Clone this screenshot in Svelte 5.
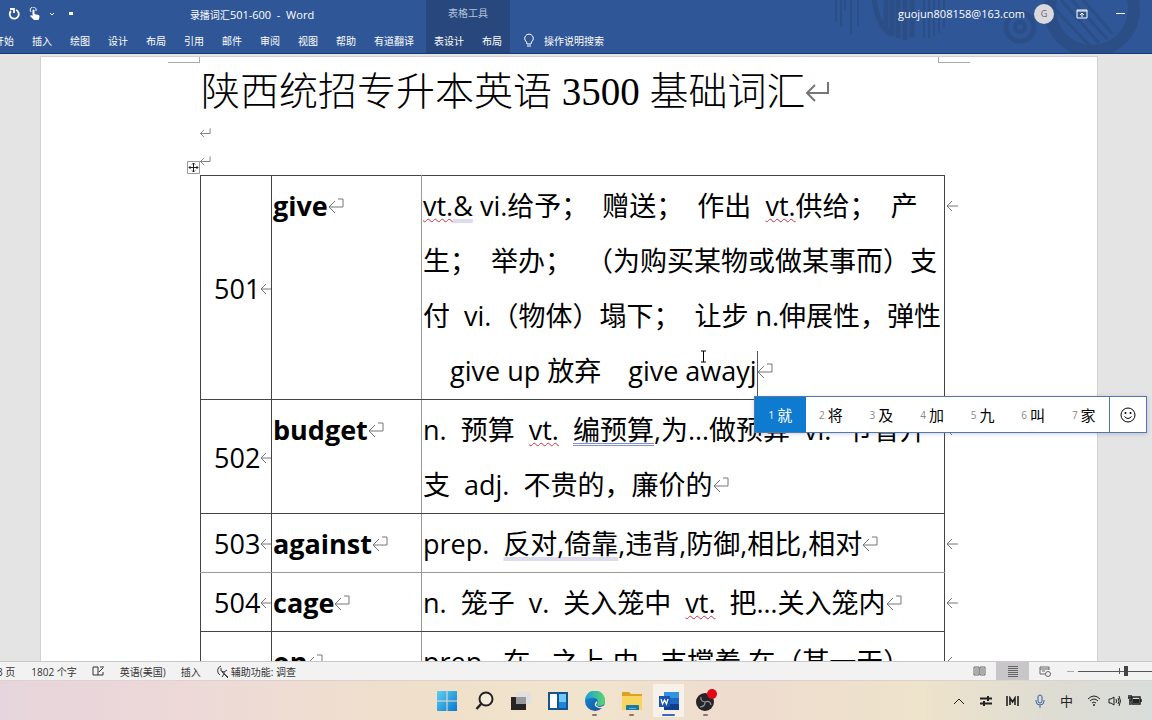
<script lang="ts">
    interface Segment {
        text: string;
        proof?: "spelling" | "grammar" | "wording";
    }

    interface Entry {
        no: number;
        word: string;
        lines: Segment[][];
    }

    const tabs = ["开始", "插入", "绘图", "设计", "布局", "引用", "邮件", "审阅", "视图", "帮助", "有道翻译"];
    const tableTabs = ["表设计", "布局"];
    const candidates = ["就", "将", "及", "加", "九", "叫", "家"];

    const entries: Entry[] = [
        {
            no: 501,
            word: "give",
            lines: [
                [
                    { text: "vt.", proof: "spelling" },
                    { text: "&", proof: "wording" },
                    { text: " vi.给予；  赠送；  作出  " },
                    { text: "vt.", proof: "spelling" },
                    { text: "供给；  产" },
                ],
                [{ text: "生；  举办；  （为购买某物或做某事而）支" }],
                [{ text: "付  vi.（物体）塌下；  让步 n.伸展性，弹性" }],
                [{ text: "　give up 放弃　give awayj" }],
            ],
        },
        {
            no: 502,
            word: "budget",
            lines: [
                [
                    { text: "n.  预算  " },
                    { text: "vt.", proof: "spelling" },
                    { text: "  " },
                    { text: "编预算", proof: "grammar" },
                    { text: ",为…做预算  vi.  节省开" },
                ],
                [{ text: "支  adj.  不贵的，廉价的" }],
            ],
        },
        {
            no: 503,
            word: "against",
            lines: [
                [
                    { text: "prep.  " },
                    { text: "反对,倚靠", proof: "wording" },
                    { text: ",违背,防御,相比,相对" },
                ],
            ],
        },
        {
            no: 504,
            word: "cage",
            lines: [
                [
                    { text: "n.  笼子  v.  关入笼中  " },
                    { text: "vt.", proof: "spelling" },
                    { text: "  把…关入笼内" },
                ],
            ],
        },
        {
            no: 505,
            word: "on",
            lines: [
                [{ text: "prep.  在…之上,由…支撑着,在（某一天）" }],
                [{ text: "adv.  向前，继续" }],
            ],
        },
    ];

    let activeCandidate = $state(0);
    let zoom = $state(50);
</script>

{#snippet cellMark()}
    <svg class="cell-mark" viewBox="0 0 16 16" aria-hidden="true"><path d="M7 3 1 9l6 6M1 9h14V1h-5" /></svg>
{/snippet}

{#snippet rowMark()}
    <svg class="row-mark" viewBox="0 0 12 12" aria-hidden="true"><path d="M6 1 1 6l5 5M1 6h11" /></svg>
{/snippet}

{#snippet paragraphMark()}
    <svg class="paragraph-mark" viewBox="0 0 24 24" aria-hidden="true"><path d="M9 4 1 12l8 8M1 12h21V1" /></svg>
{/snippet}

<div class="window">
    <header class="ribbon">
        <svg class="ribbon-art" viewBox="0 0 320 53" aria-hidden="true">
            <path d="M4 0v22M9 0v27M13 0v10M19 0v34M26 0v26" stroke-width="2" />
            <path d="M42 0q4 26 17 34M54 0v30M60 0v36M66 0v38M73 0v40M80 0v38" stroke-width="5" />
            <path d="M92 0v38M97 0v38M102 0v36M107 0v33M112 0v28" stroke-width="2" />
            <circle cx="188" cy="27" r="14" stroke-width="5" />
            <circle cx="188" cy="27" r="5" stroke-width="4" />
            <circle cx="260" cy="9" r="42" stroke-width="12" />
            <path d="m218 4 40 42M229 0l38 43M240 0l35 39M251 0l30 34" stroke-width="3" />
        </svg>

        <div class="title-bar">
            <div class="quick-access">
                <button aria-label="重复">
                    <svg width="12" height="12" viewBox="0 0 12 12"><path d="M8 2a4.500 4.500 0 1 1-5 1M2 1h4v4" stroke-width="1.800" /></svg>
                </button>
                <button aria-label="触摸模式">
                    <svg width="11" height="13" viewBox="0 0 11 13"><path d="M2 5a3 3 0 1 1 5-1" /><path class="solid" d="M3.500 3q1-1 2 0v4l4 1q1 0 1 2l-1 3H5L1 9q1-1.500 2.500 0z" /></svg>
                </button>
                <button aria-label="更多触摸选项">
                    <svg width="6" height="4" viewBox="0 0 6 4"><path d="m1 1 2 2 2-2" /></svg>
                </button>
                <button class="customize" aria-label="自定义快速访问工具栏">
                    <svg width="4" height="4" viewBox="0 0 4 4"><path class="solid" d="M0 0h4v3H0z" /></svg>
                </button>
            </div>
            <div class="file-name"><span>录播词汇</span>501-600&nbsp; -&nbsp; Word</div>
        </div>

        <nav class="tabs">
            {#each tabs as tab}
                <button>{tab}</button>
            {/each}
        </nav>

        <div class="table-tools">
            <div class="table-tools-title">表格工具</div>
            <nav>
                {#each tableTabs as tab}
                    <button>{tab}</button>
                {/each}
            </nav>
        </div>

        <div class="account">
            <span class="email">guojun808158@163.com</span>
            <span class="avatar">G</span>
            <button aria-label="功能区显示选项">
                <svg width="12" height="10" viewBox="0 0 12 10"><path d="M1 1h10v8H1zM1 2h10M6 8V4M4 6l2-2 2 2" /></svg>
            </button>
            <button aria-label="最小化">
                <svg width="10" height="10" viewBox="0 0 10 10"><path d="M0 4.500h9" /></svg>
            </button>
        </div>

        <button class="tell-me">
            <svg width="12" height="15" viewBox="0 0 12 15"><path d="M4 11q0-2-2-4a4.300 4.300 0 1 1 8 0q-2 2-2 4zM4 13h4" /></svg>
            操作说明搜索
        </button>
    </header>

    <main class="workspace">
        <article class="page">
            <span class="crop-mark left"></span>
            <span class="crop-mark right"></span>

            <h1>陕西统招专升本英语 3500 基础词汇{@render paragraphMark()}</h1>
            <p class="blank">{@render paragraphMark()}</p>
            <p class="blank">{@render paragraphMark()}</p>

            <div class="table-frame">
                <svg class="move-handle" viewBox="0 0 13 13" aria-hidden="true">
                    <path class="box" d="M.5.5h12v12H.5z" />
                    <path d="M6.500 2v9M2 6.500h9M5 3.500 6.500 2 8 3.500M5 9.500 6.500 11 8 9.500M3.500 5 2 6.500 3.500 8M9.500 5 11 6.500 9.500 8" />
                </svg>
                <table>
                    <tbody>
                        {#each entries as entry}
                            <tr>
                                <td class="no"><div>{entry.no}{@render rowMark()}</div></td>
                                <td class="word">{entry.word}{@render cellMark()}</td>
                                <td class="meaning">
                                    {#each entry.lines as line, i}
                                        <div class="line">{#each line as segment}<span class={segment.proof}>{segment.text}</span>{/each}{#if entry.no === 501 && i === 3}<span class="caret"></span>{/if}{#if i === entry.lines.length - 1}{@render cellMark()}{/if}</div>
                                    {/each}
                                </td>
                                <td class="row-end">{@render rowMark()}</td>
                            </tr>
                        {/each}
                    </tbody>
                </table>
            </div>
        </article>
    </main>

    <footer class="status-bar">
        <span class="page-count">3 页</span>
        <span class="word-count">1802 个字</span>
        <svg class="proofing" width="13" height="10" viewBox="0 0 13 10" aria-hidden="true"><path d="M6 1H1v8h5zM6 9h5V6M8 1h4M7 6l4-4" /></svg>
        <span class="language">英语(美国)</span>
        <span class="mode">插入</span>
        <svg class="access" width="13" height="13" viewBox="0 0 13 13" aria-hidden="true"><path d="M5 1a5 5 0 0 0-1 9M5 3v3l3 1 3-2M8 7v2l-2 3M8 9l4 4M6 7l6 5" /></svg>
        <span>辅助功能: 调查</span>

        <div class="views">
            <button aria-label="阅读视图">
                <svg width="13" height="10" viewBox="0 0 13 10"><path d="M1 1h5v8H1zM7 1h5v8H7zM2 3h3M2 5h3M2 7h3M8 3h3M8 5h3M8 7h3" /></svg>
            </button>
            <button class="active" aria-label="页面视图">
                <svg width="12" height="12" viewBox="0 0 12 12"><path d="M1 1.500h10M1 3.500h10M1 5.500h10M1 7.500h10M1 9.500h10M1 11.500h10" /></svg>
            </button>
            <button aria-label="Web 版式视图">
                <svg width="13" height="11" viewBox="0 0 13 11"><path d="M6 8H1V1h9v3M1 3h9M3 5h3" /><circle cx="9" cy="8" r="2.500" /></svg>
            </button>
            <button class="zoom-out" aria-label="缩小">
                <svg width="7" height="3" viewBox="0 0 7 3"><path d="M0 1.500h7" /></svg>
            </button>
            <input type="range" aria-label="显示比例" min="0" max="100" bind:value={zoom} />
        </div>
    </footer>

    <div class="taskbar">
        <div class="apps">
            <button aria-label="开始">
                <svg width="20" height="20" viewBox="0 0 20 20">
                    <defs><linearGradient id="start" x2="1" y2="1"><stop stop-color="#5ed0f2" /><stop offset="1" stop-color="#0a78cf" /></linearGradient></defs>
                    <path fill="url(#start)" d="M0 0h9.500v9.500H0zM10.500 0H20v9.500h-9.500zM0 10.500h9.500V20H0zM10.500 10.500H20V20h-9.500z" />
                </svg>
            </button>
            <button aria-label="搜索">
                <svg width="20" height="20" viewBox="0 0 20 20"><circle cx="12" cy="8" r="6.500" fill="#f6ecdc" stroke="#222" stroke-width="2" /><path d="m7.500 12.500-5 5.500" stroke="#222" stroke-width="2.500" /></svg>
            </button>
            <button aria-label="任务视图">
                <svg width="20" height="20" viewBox="0 0 20 20"><path fill="#252525" d="M0 6h15v13H0z" /><path fill="#e0e0e0" d="M5 1h15v12H5z" /><path fill="#9a9a9a" d="M5 6h10v7H5z" /></svg>
            </button>
            <button aria-label="小组件">
                <svg width="20" height="20" viewBox="0 0 20 20"><path fill="#15558f" d="M0 1h20v18H0z" /><path fill="#fff" d="M2 3h7v14H2z" /><path fill="#6fcbf5" d="M11 3h7v8h-7z" /><path fill="#1c86d6" d="M11 11h7v6h-7z" /></svg>
            </button>
            <button class="running" aria-label="Microsoft Edge">
                <svg width="20" height="20" viewBox="0 0 20 20">
                    <defs>
                        <linearGradient id="edge-top" x2="1" y2="0"><stop stop-color="#1c9de0" /><stop offset="1" stop-color="#5bd66a" /></linearGradient>
                        <linearGradient id="edge-low" x2="1" y2="1"><stop stop-color="#1c8fd8" /><stop offset="1" stop-color="#0c4a9a" /></linearGradient>
                    </defs>
                    <circle cx="10" cy="10" r="10" fill="url(#edge-low)" />
                    <path fill="url(#edge-top)" d="M0 9a10 10 0 0 1 20 1c0 4-3 5-6 5-2 0-3-1-2-2 3-4-2-7-6-6-3 0-5 1-6 2z" />
                    <path fill="#f4e9d6" d="M12 10c1 2-1 3-1 4 2 3 6 2 9 0l-2 3c-7 1-11-3-6-7z" />
                </svg>
            </button>
            <button class="running" aria-label="文件资源管理器">
                <svg width="20" height="20" viewBox="0 0 20 20"><path fill="#dba11f" d="M0 1h7l2 2h11v5H0z" /><path fill="#f8d560" d="M0 5h20v14H0z" /><path fill="#1a78a8" d="M4 15q0-1 1-1h11q1 0 1 1v4H4z" /><path fill="#54bde0" d="M7 17h7v1H7z" /></svg>
            </button>
            <button class="running current" aria-label="Word">
                <svg width="20" height="20" viewBox="0 0 20 20"><path fill="#2f93e2" d="M5 1h15v7H5z" /><path fill="#2167c2" d="M5 7h15v6H5z" /><path fill="#133d8b" d="M5 13h15v6H5z" /><path fill="#1a56b0" d="M0 5h11v11H0z" /><path d="m2 8 1.500 5 2-4 2 4L9 8" stroke="#fff" stroke-width="1.300" fill="none" /></svg>
            </button>
            <button class="running" aria-label="OBS Studio">
                <svg width="24" height="24" viewBox="0 0 24 24"><circle cx="11" cy="13" r="9" fill="#262428" /><path d="M11 13q-5-1-4-5M11 13q5-2 6 3M11 13q0 5-5 5" stroke="#999" stroke-width="1.200" fill="none" /><circle cx="18" cy="5" r="5" fill="#e30613" /></svg>
            </button>
        </div>

        <div class="tray">
            <button aria-label="显示隐藏的图标"><svg width="12" height="8" viewBox="0 0 12 8"><path d="m1 7 5-5 5 5" /></svg></button>
            <button aria-label="同步"><svg width="12" height="10" viewBox="0 0 12 10"><path d="M0 2.500h12M0 7.500h12" stroke-width="2" /><path d="M8 0v5M4 5v5" stroke-width="2" /></svg></button>
            <button aria-label="音频"><svg width="13" height="10" viewBox="0 0 13 10"><path d="M1 0v10M12 0v10M4 9V2l2.500 4L9 2v7" stroke-width="1.600" /></svg></button>
            <button class="mic" aria-label="麦克风"><svg width="10" height="14" viewBox="0 0 10 14"><rect x="3" y="1" width="4" height="8" rx="2" /><path d="M1 6v1q0 4 4 4t4-4V6M5 11v3" /></svg></button>
            <button class="ime-state" aria-label="输入法">中</button>
            <button class="system" aria-label="网络、音量和电池">
                <svg width="14" height="11" viewBox="0 0 14 11"><path d="M1 4q6-6 12 0M3 6q4-4 8 0M5 8q2-2 4 0" /><circle class="dot" cx="7" cy="10" r="1" /></svg>
                <svg width="13" height="10" viewBox="0 0 13 10"><path d="M1 3h2l3-2v8L3 7H1zM8 3q1 2 0 4M10 2q2 3 0 6M11 0q3 5 0 10" /></svg>
                <svg width="14" height="11" viewBox="0 0 14 11"><path d="M4 2h8v7H4zM13 4v3M1 0v3M3 0v3M0 3h4v2H1M2 5v5" stroke-width="1.500" /><path class="dot" d="M5 4h6v4H5z" /></svg>
            </button>
        </div>
    </div>

    <svg class="pointer" viewBox="0 0 7 13" aria-hidden="true"><path d="M1 1h5M3.500 1v11M1 12h5" /></svg>

    <div class="ime">
        {#each candidates as candidate, i}
            <button class="candidate" class:active={i === activeCandidate} onclick={() => (activeCandidate = i)}>
                <small>{i + 1}</small>{candidate}
            </button>
        {/each}
        <button class="emoji" aria-label="表情符号">
            <svg width="16" height="16" viewBox="0 0 16 16"><circle cx="8" cy="8" r="7" /><path d="M4.500 9.500q3.500 4 7 0" /><circle class="eye" cx="5.500" cy="6" r="1" /><circle class="eye" cx="10.500" cy="6" r="1" /></svg>
        </button>
    </div>
</div>

<style>

    :global(body) {
        margin: 0;
    }

    .window {
        position: relative;
        display: flex;
        flex-direction: column;
        height: 100vh;
        overflow: hidden;
        background: #e4e4e4;
        color: #000;
        font-family: "Open Sans", "Noto Sans CJK SC", sans-serif;
        font-size: 10px;
    }

    button {
        display: flex;
        align-items: center;
        justify-content: center;
        margin: 0;
        padding: 0;
        border: 0;
        background: none;
        color: inherit;
        font: inherit;
        white-space: nowrap;
    }

    svg {
        flex-shrink: 0;
        fill: none;
        stroke: currentColor;
    }

    /* ribbon */

    .ribbon {
        position: relative;
        display: grid;
        grid-template-columns: auto auto 1fr;
        grid-template-rows: 27px 26px;
        flex-shrink: 0;
        border-bottom: 1px solid #183a78;
        background: #2f5697;
        color: #fff;
    }

    .ribbon-art {
        position: absolute;
        top: 0;
        right: 0;
        width: 320px;
        height: 53px;
        color: #2c4e86;
    }

    .title-bar {
        display: flex;
        align-items: center;
        padding-left: 8px;
    }

    .quick-access {
        display: flex;
        align-items: center;
        gap: 9px;
    }

    .customize {
        margin-left: 5px;
    }

    .solid {
        fill: currentColor;
        stroke: none;
    }

    .file-name {
        flex: 1;
        padding-top: 1px;
        padding-left: 5px;
        font-size: 11px;
        text-align: center;
    }

    .file-name span {
        font-size: 10px;
    }

    .tabs {
        display: flex;
        grid-row: 2;
        margin-left: -15px;
        padding-right: 3px;
    }

    .tabs button {
        padding: 0 9px;
    }

    .table-tools {
        display: grid;
        grid-row: 1 / 3;
        grid-column: 2;
        grid-template-rows: 27px 26px;
        padding: 0 8px;
        background: #27477d;
    }

    .table-tools-title {
        color: #b4c3dc;
        line-height: 27px;
        text-align: center;
    }

    .table-tools nav {
        display: flex;
        gap: 18px;
    }

    .account {
        position: relative;
        display: flex;
        grid-column: 3;
        align-items: center;
        justify-content: flex-end;
        padding-right: 26px;
    }

    .email {
        font-size: 11px;
    }

    .avatar {
        width: 20px;
        height: 20px;
        margin: 0 22px 0 9px;
        border-radius: 50%;
        background: #d9d9de;
        color: #666;
        font-size: 9px;
        line-height: 20px;
        text-align: center;
    }

    .account button + button {
        margin-left: 28px;
    }

    .tell-me {
        grid-row: 2;
        grid-column: 3;
        justify-self: start;
        gap: 9px;
        padding-left: 13px;
    }

    /* document */

    .workspace {
        flex: 1;
        min-height: 0;
        padding: 3px 55px 0 41px;
        overflow: hidden;
    }

    .page {
        position: relative;
        min-height: 100%;
        padding: 8px 126px 0 159px;
        box-shadow: 0 0 0 1px #d0d0d0;
        box-sizing: border-box;
        background: #fff;
    }

    .crop-mark {
        position: absolute;
        top: 0;
        width: 31px;
        height: 5px;
        border-bottom: 1px solid #aaa;
    }

    .crop-mark.left {
        left: 127px;
        border-right: 1px solid #aaa;
    }

    .crop-mark.right {
        right: 127px;
        border-left: 1px solid #aaa;
    }

    h1 {
        margin: 0;
        padding-left: 1px;
        font-family: "Liberation Serif", "Noto Sans CJK SC", serif;
        font-size: 39px;
        font-weight: 300;
        line-height: 54px;
        white-space: nowrap;
    }

    .paragraph-mark {
        width: 24px;
        height: 24px;
        color: #777;
        stroke-width: 2;
    }

    .blank {
        display: flex;
        align-items: center;
        height: 28px;
        margin: 0;
    }

    .blank .paragraph-mark {
        width: 11px;
        height: 11px;
    }

    .table-frame {
        position: relative;
    }

    .move-handle {
        position: absolute;
        top: -14px;
        left: -13px;
        width: 13px;
        height: 13px;
        color: #222;
    }

    .move-handle .box {
        stroke: #999;
    }

    table {
        width: 100%;
        border-collapse: collapse;
        table-layout: fixed;
        font-size: 27px;
        line-height: 55px;
    }

    td {
        padding: 2px 0 1px 1px;
        overflow: hidden;
        border: 1px solid #444;
        vertical-align: top;
        white-space: nowrap;
    }

    tr:nth-child(3) td {
        border-bottom-color: #999;
    }

    .no {
        width: 69px;
        vertical-align: middle;
    }

    .no div {
        padding-left: 12px;
        overflow: hidden;
    }

    .word {
        width: 148px;
        border-right-color: #999;
        font-weight: 700;
    }

    td.row-end {
        width: 24px;
        padding-left: 1px;
        border: 0;
    }

    .line {
        height: 55px;
        white-space: pre;
    }

    .cell-mark {
        width: 16px;
        height: 16px;
        color: #777;
        vertical-align: 2px;
    }

    .row-mark {
        width: 12px;
        height: 12px;
        color: #777;
        vertical-align: 4px;
    }

    .spelling {
        text-decoration: underline wavy #c8324a 1px;
        text-underline-offset: 2px;
    }

    .grammar {
        text-decoration: underline double #7f92cf 1px;
        text-underline-offset: 3px;
    }

    .wording {
        text-decoration: underline #dcdcee 4px;
        text-underline-offset: 3px;
    }

    .caret {
        display: inline-block;
        width: 1px;
        height: 45px;
        margin-right: -1px;
        background: #555;
        vertical-align: middle;
    }

    /* status bar */

    .status-bar {
        display: flex;
        flex-shrink: 0;
        align-items: center;
        height: 18px;
        border-top: 1px solid #c8c8c8;
        background: #f2f2f2;
        color: #333;
        white-space: nowrap;
    }

    .page-count {
        margin: 0 16px 0 -3px;
    }

    .word-count,
    .language,
    .mode,
    .proofing {
        margin-right: 15px;
    }

    .access {
        margin-right: 2px;
    }

    .views {
        display: flex;
        align-items: center;
        align-self: stretch;
        margin-left: auto;
        color: #666;
    }

    .views button {
        width: 33px;
        height: 100%;
    }

    .views .active {
        background: #c9c6c9;
    }

    .views .zoom-out {
        width: 16px;
        color: #aaa;
    }

    input {
        width: 96px;
        height: 18px;
        margin: 0 -22px 0 0;
        appearance: none;
        background:
            linear-gradient(#555, #555) 41px 6px / 1px 6px no-repeat,
            linear-gradient(#555, #555) 0 9px / 100% 1px no-repeat;
    }

    input::-webkit-slider-thumb {
        width: 4px;
        height: 10px;
        appearance: none;
        background: #444;
    }

    /* taskbar */

    .taskbar {
        display: grid;
        grid-template-columns: 1fr auto 1fr;
        flex-shrink: 0;
        height: 40px;
        border-top: 1px solid #dcd2cf;
        box-sizing: border-box;
        background: linear-gradient(90deg, #e6d5dc, #ecd7d9 12%, #efdcd3 25%, #f0dfca 36%, #f1e4cc 50%, #eedccf 64%, #eee3cb 80%, #dddcd3 92%, #d9dddb);
        color: #222;
    }

    .apps {
        display: flex;
        grid-column: 2;
    }

    .apps button {
        position: relative;
        width: 37px;
    }

    .apps svg {
        stroke: none;
    }

    .apps .current {
        background: linear-gradient(#f8f1ea, #f8f1ea) center 3px / 31px 33px no-repeat;
    }

    .running::after {
        position: absolute;
        bottom: 4px;
        left: 16px;
        width: 5px;
        height: 2px;
        border-radius: 1px;
        background: #927565;
        content: "";
    }

    .current::after {
        left: 12px;
        width: 13px;
        background: #3a6abf;
    }

    .tray {
        display: flex;
        align-items: center;
        justify-self: end;
        padding-right: 10px;
    }

    .tray button {
        width: 27px;
        height: 100%;
    }

    .mic {
        color: #3561a8;
    }

    .tray .ime-state {
        font-size: 13px;
    }

    .tray .system {
        gap: 7px;
        width: auto;
        padding-left: 7px;
    }

    .dot,
    .eye {
        fill: currentColor;
        stroke: none;
    }

    /* floating items */

    .pointer {
        position: absolute;
        top: 350px;
        left: 700px;
        width: 7px;
        height: 13px;
    }

    .ime {
        position: absolute;
        top: 396px;
        left: 754px;
        display: flex;
        width: 391px;
        height: 35px;
        border: 1px solid #5577a8;
        background: #fff;
        box-shadow: 0 1px 4px rgba(90, 110, 170, 0.3);
    }

    .candidate {
        flex: 1;
        gap: 3px;
        font-size: 15px;
    }

    .candidate small {
        color: #888;
        font-size: 10px;
    }

    .candidate.active {
        background: #0f7bd0;
        color: #fff;
    }

    .candidate.active small {
        color: #fff;
    }

    .emoji {
        width: 37px;
        border-left: 1px solid #5577a8;
    }

</style>
